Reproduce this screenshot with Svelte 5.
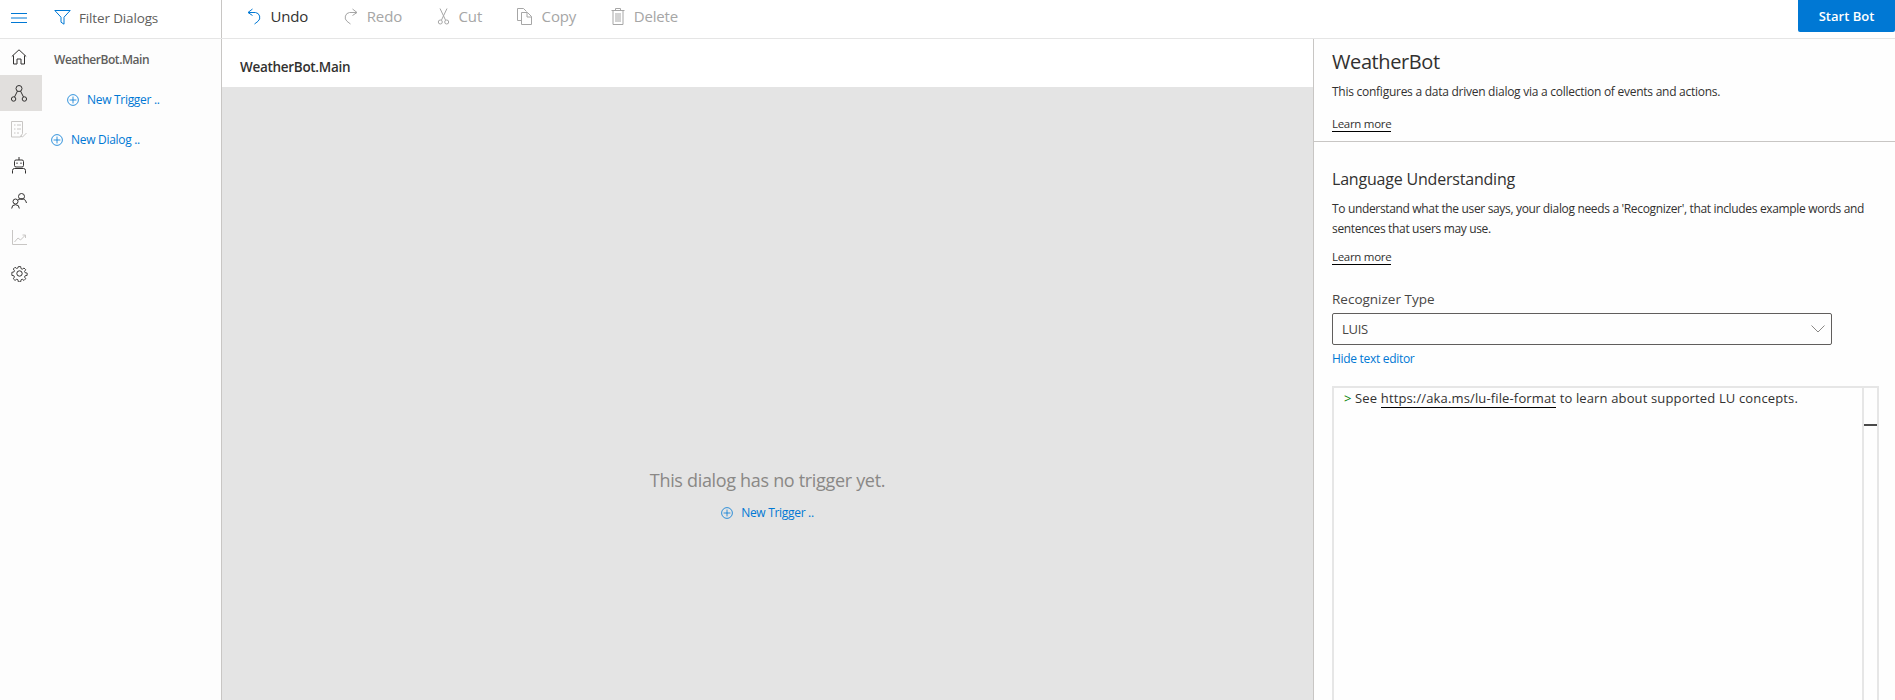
<script>
	const disabled = '#a6a6a6';
</script>

{#snippet plus()}
	<svg class="plus" viewBox="0 0 12 12" fill="none" stroke="currentColor" stroke-width="0.8">
		<circle cx="6" cy="6" r="5.4" />
		<path d="M6 2.6v6.8M2.6 6h6.8" />
	</svg>
{/snippet}

<div class="app">
	<header class="topbar">
		<div class="toggle">
			<svg width="16" height="10" viewBox="0 0 16 10" stroke="#0078d4" stroke-width="1">
				<path d="M0 .5h16M0 5h16M0 9.500h16" />
			</svg>
		</div>
		<div class="filter">
			<svg width="17" height="15" viewBox="0 0 17 15" fill="none" stroke="#0078d4" stroke-width="1">
				<path d="M.8.500h15.400L10 7.200v7l-3-2V7.200z" />
			</svg>
			<span>Filter Dialogs</span>
		</div>
		<div class="toolbar">
			<button class="tool active">
				<svg width="15" height="17" viewBox="0 0 15 17" fill="none" stroke="#0078d4" stroke-width="1">
					<path d="M5.500 1 1 4.500l4.500 3M1 4.500h7.500a5 5 0 0 1 2.500 8.800L7.500 16" />
				</svg>
				<span>Undo</span>
			</button>
			<button class="tool">
				<svg width="15" height="17" viewBox="0 0 15 17" fill="none" stroke={disabled} stroke-width="1">
					<path d="M9.500 1 14 4.500l-4.500 3M14 4.500H6.500a5 5 0 0 0-2.500 8.800L7.500 16" />
				</svg>
				<span>Redo</span>
			</button>
			<button class="tool">
				<svg width="13" height="17" viewBox="0 0 13 17" fill="none" stroke={disabled} stroke-width="1">
					<path d="M3 0.500 8.500 12M10 0.500 4.500 12" />
					<circle cx="3.300" cy="14" r="2" />
					<circle cx="9.700" cy="14" r="2" />
				</svg>
				<span>Cut</span>
			</button>
			<button class="tool">
				<svg width="16" height="17" viewBox="0 0 16 17" fill="none" stroke={disabled} stroke-width="1">
					<path d="M4.500 12.500H.5V.5h6l3 3" />
					<path d="M4.500 4.500h6l4 4v8h-10zM10 4.500v4.500h4.500" />
				</svg>
				<span>Copy</span>
			</button>
			<button class="tool">
				<svg width="14" height="17" viewBox="0 0 14 17" fill="none" stroke={disabled} stroke-width="1">
					<path d="M.5 2.500h13M4.500 2.500V.5h5v2M2 2.500v14h10v-14M5 5v9M7 5v9M9 5v9" />
				</svg>
				<span>Delete</span>
			</button>
		</div>
		<button class="start">Start Bot</button>
	</header>

	<div class="body">
		<nav class="rail">
			<div class="rail-item">
				<svg width="16" height="16" viewBox="0 0 16 16" fill="none" stroke="#323130" stroke-width="1">
					<path d="M.8 7.500 8 .8l7.200 6.700M2.500 6.500v8.500h3.500v-5h4v5h3.500V6.500" />
				</svg>
			</div>
			<div class="rail-item selected">
				<svg width="16" height="17" viewBox="0 0 16 17" fill="none" stroke="#323130" stroke-width="1">
					<circle cx="8" cy="3.500" r="3" />
					<circle cx="2.600" cy="14" r="2.200" />
					<circle cx="13.400" cy="14" r="2.200" />
					<path d="M6.500 6 3.500 12M9.500 6l3 6" />
				</svg>
			</div>
			<div class="rail-item">
				<svg width="16" height="17" viewBox="0 0 16 17" fill="none" stroke="#c8c6c4" stroke-width="1">
					<path d="M.5.500h11v12l-2 3.500H.5zM3 4h1.500M6 4h4M3 8h1.500M6 8h4M3 12h1.500M6 12h2M9 15l2.500 1 4-4" />
				</svg>
			</div>
			<div class="rail-item">
				<svg width="14" height="17" viewBox="0 0 14 17" fill="none" stroke="#323130" stroke-width="1">
					<path d="M7 0v3" />
					<rect x="2.500" y="3" width="9" height="7" rx="1.500" />
					<path d="M5 5.500v1.500M9 5.500v1.500" />
					<path d="M.5 16.500v-3a2 2 0 0 1 2-2h9a2 2 0 0 1 2 2v3" />
				</svg>
			</div>
			<div class="rail-item">
				<svg width="16" height="16" viewBox="0 0 16 16" fill="none" stroke="#323130" stroke-width="1">
					<circle cx="10.500" cy="3.500" r="3" />
					<circle cx="4.500" cy="8.500" r="2.500" />
					<path d="M.7 15.500a3.800 3.800 0 0 1 7.600 0M7 7a5 5 0 0 1 8.500 3" />
				</svg>
			</div>
			<div class="rail-item">
				<svg width="15" height="15" viewBox="0 0 15 15" fill="none" stroke="#c8c6c4" stroke-width="1">
					<path d="M.5 0v14.500H15M2.500 12l3.500-4 2.500 2 5-5M10.500 5h3v3" />
				</svg>
			</div>
			<div class="rail-item">
				<svg width="17" height="17" viewBox="0 0 17 17" fill="none" stroke="#323130" stroke-width="1">
					<circle cx="8.500" cy="8.500" r="2.700" />
					<path d="M7.200.8h2.600l.4 2.300 1.400.6 1.900-1.300 1.900 1.900-1.300 1.900.6 1.400 2.300.4v2.600l-2.300.4-.6 1.400 1.300 1.900-1.900 1.900-1.900-1.300-1.400.6-.4 2.300H7.200l-.4-2.300-1.400-.6-1.900 1.300-1.900-1.900 1.300-1.900-.6-1.400-2.300-.4V7.200l2.300-.4.6-1.400-1.300-1.900 1.900-1.900 1.900 1.300 1.400-.6z" transform="translate(.85 .85) scale(.9)" />
				</svg>
			</div>
		</nav>

		<aside class="tree">
			<div class="dialog-name">WeatherBot.Main</div>
			<a class="link add-trigger">{@render plus()}<span>New Trigger ..</span></a>
			<a class="link add-dialog">{@render plus()}<span>New Dialog ..</span></a>
		</aside>

		<main class="canvas">
			<div class="canvas-title">WeatherBot.Main</div>
			<div class="canvas-empty">
				<p>This dialog has no trigger yet.</p>
				<a class="link">{@render plus()}<span>New Trigger ..</span></a>
			</div>
		</main>

		<section class="props">
			<div class="props-head">
				<h1>WeatherBot</h1>
				<p class="desc">This configures a data driven dialog via a collection of events and actions.</p>
				<a class="more">Learn more</a>
			</div>
			<div class="props-body">
				<h2>Language Understanding</h2>
				<p class="desc">To understand what the user says, your dialog needs a 'Recognizer', that includes example words and sentences that users may use.</p>
				<a class="more">Learn more</a>
				<label for="rec">Recognizer Type</label>
				<div class="select" id="rec">
					<span>LUIS</span>
					<svg width="14" height="8" viewBox="0 0 14 8" fill="none" stroke="#8a8886" stroke-width="1">
						<path d="M.5.500 7 7l6.500-6.500" />
					</svg>
				</div>
				<div class="hide-editor">Hide text editor</div>
				<div class="editor">
					<div class="code">
						<span class="quote">&gt;</span> See <span class="url">https://aka.ms/lu-file-format</span> to learn about supported LU concepts.
					</div>
					<div class="ruler"><i></i></div>
				</div>
			</div>
		</section>
	</div>
</div>

<style>
	:global(body) {
		background: #fff;
		overflow: hidden;
	}

	.app {
		height: 700px;
		display: flex;
		flex-direction: column;
		font-family: 'Open Sans', 'Noto Sans', sans-serif;
		color: #323130;
		overflow: hidden;
	}

	/* top bar */
	.topbar {
		height: 38px;
		flex-shrink: 0;
		display: flex;
		align-items: stretch;
		border-bottom: 1px solid #e5e5e5;
		box-sizing: content-box;
	}

	.toggle {
		width: 42px;
		display: flex;
		align-items: center;
		justify-content: center;
		padding: 0 4px 2px 0;
		box-sizing: border-box;
	}

	.filter {
		width: 180px;
		box-sizing: border-box;
		display: flex;
		align-items: center;
		gap: 8px;
		padding: 0 0 3px 12px;
		border-right: 1px solid #c8c6c4;
		font-size: 13.500px;
		letter-spacing: -0.15px;
		color: #605e5c;
	}

	.toolbar {
		flex: 1;
		display: flex;
		align-items: center;
		padding: 0 0 6px 25px;
		gap: 35px;
	}

	.tool {
		display: flex;
		align-items: center;
		gap: 8.500px;
		border: 0;
		padding: 0;
		background: none;
		font: inherit;
		font-size: 15px;
		letter-spacing: -0.15px;
		color: #a6a6a6;
	}

	.tool.active {
		color: #323130;
	}

	.start {
		width: 97px;
		height: 32px;
		border: 0;
		border-radius: 0 0 2px 2px;
		background: #0078d4;
		color: #fff;
		font: inherit;
		font-size: 13px;
		font-weight: 600;
	}

	.body {
		flex: 1;
		min-height: 0;
		display: flex;
	}

	/* left rail */
	.rail {
		width: 42px;
		flex-shrink: 0;
		display: flex;
		flex-direction: column;
		background: #fdfdfd;
	}

	.rail-item {
		height: 36px;
		box-sizing: border-box;
		padding-right: 4px;
		display: flex;
		align-items: center;
		justify-content: center;
	}

	.rail-item.selected {
		background: #e1dfdd;
	}

	/* dialog tree */
	.tree {
		width: 180px;
		flex-shrink: 0;
		box-sizing: border-box;
		border-right: 1px solid #c8c6c4;
		background: #fdfdfd;
		font-size: 12px;
		letter-spacing: -0.3px;
	}

	.dialog-name {
		padding: 13px 0 0 12px;
		line-height: 16px;
		font-weight: 600;
		letter-spacing: -0.45px;
		color: #605e5c;
	}

	.link {
		display: flex;
		align-items: center;
		gap: 8px;
		color: #0078d4;
		font-size: 12px;
		letter-spacing: -0.3px;
	}

	.plus {
		width: 12px;
		height: 12px;
		flex-shrink: 0;
	}

	.add-trigger {
		padding: 24px 0 0 25px;
		line-height: 16px;
	}

	.add-dialog {
		padding: 24px 0 0 9px;
		line-height: 16px;
	}

	/* canvas */
	.canvas {
		flex: 1;
		min-width: 0;
		display: flex;
		flex-direction: column;
	}

	.canvas-title {
		height: 48px;
		flex-shrink: 0;
		display: flex;
		align-items: center;
		padding: 8px 0 0 18px;
		box-sizing: border-box;
		font-size: 13.500px;
		font-weight: 600;
		letter-spacing: -0.3px;
		color: #323130;
	}

	.canvas-empty {
		flex: 1;
		background: #e4e4e4;
		display: flex;
		flex-direction: column;
		align-items: center;
		padding-top: 381px;
	}

	.canvas-empty p {
		margin: 0 0 12px;
		line-height: 24px;
		font-size: 18px;
		letter-spacing: -0.32px;
		color: #8a8886;
	}

	/* properties panel */
	.props {
		width: 582px;
		flex-shrink: 0;
		box-sizing: border-box;
		border-left: 1px solid #c8c6c4;
		overflow: hidden;
		background: #fefefe;
	}

	.props-head {
		height: 102px;
		box-sizing: content-box;
		padding: 0 0 0 18px;
		border-bottom: 1px solid #c8c6c4;
	}

	h1 {
		margin: 0;
		padding-top: 9px;
		line-height: 28px;
		font-size: 20px;
		font-weight: 500;
		letter-spacing: -0.4px;
		color: #323130;
	}

	.desc {
		margin: 0;
		font-size: 12px;
		line-height: 20px;
		letter-spacing: -0.34px;
		color: #323130;
	}

	.props-head .desc {
		padding-top: 6px;
		letter-spacing: -0.26px;
	}

	.more {
		display: inline-block;
		margin-top: 14px;
		font-size: 11.500px;
		line-height: 15px;
		letter-spacing: -0.3px;
		color: #323130;
		border-bottom: 1px solid #000;
	}

	.props-body {
		padding: 0 15px 0 18px;
	}

	h2 {
		margin: 0;
		padding-top: 25px;
		line-height: 24px;
		font-size: 16px;
		font-weight: 500;
		letter-spacing: -0.2px;
		color: #323130;
	}

	.props-body .desc {
		padding-top: 8px;
		width: 540px;
	}

	.props-body .more {
		margin-top: 10px;
	}

	label {
		display: block;
		margin-top: 24px;
		line-height: 18px;
		font-size: 13.500px;
		font-weight: 500;
		letter-spacing: 0;
		color: #484644;
	}

	.select {
		width: 500px;
		height: 32px;
		margin-top: 5px;
		box-sizing: border-box;
		display: flex;
		align-items: center;
		justify-content: space-between;
		padding: 0 6px 0 9px;
		border: 1px solid #605e5c;
		border-radius: 2px;
		font-size: 13px;
		letter-spacing: -0.3px;
		color: #484644;
	}

	.hide-editor {
		margin-top: 6px;
		line-height: 16px;
		font-size: 12px;
		letter-spacing: -0.3px;
		color: #0078d4;
	}

	.editor {
		margin-top: 19px;
		height: 320px;
		width: 547px;
		box-sizing: border-box;
		border: 2px solid #e6e6e6;
		display: flex;
	}

	.code {
		flex: 1;
		padding: 1px 0 0 10px;
		line-height: 18px;
		font-size: 13px;
		letter-spacing: 0.14px;
		color: #323130;
	}

	.quote {
		color: #008000;
	}

	.url {
		border-bottom: 1px solid #000;
	}

	.ruler {
		width: 13px;
		border-left: 2px solid #e6e6e6;
	}

	.ruler i {
		display: block;
		height: 2px;
		margin-top: 36px;
		background: #4a4a4a;
	}
</style>
